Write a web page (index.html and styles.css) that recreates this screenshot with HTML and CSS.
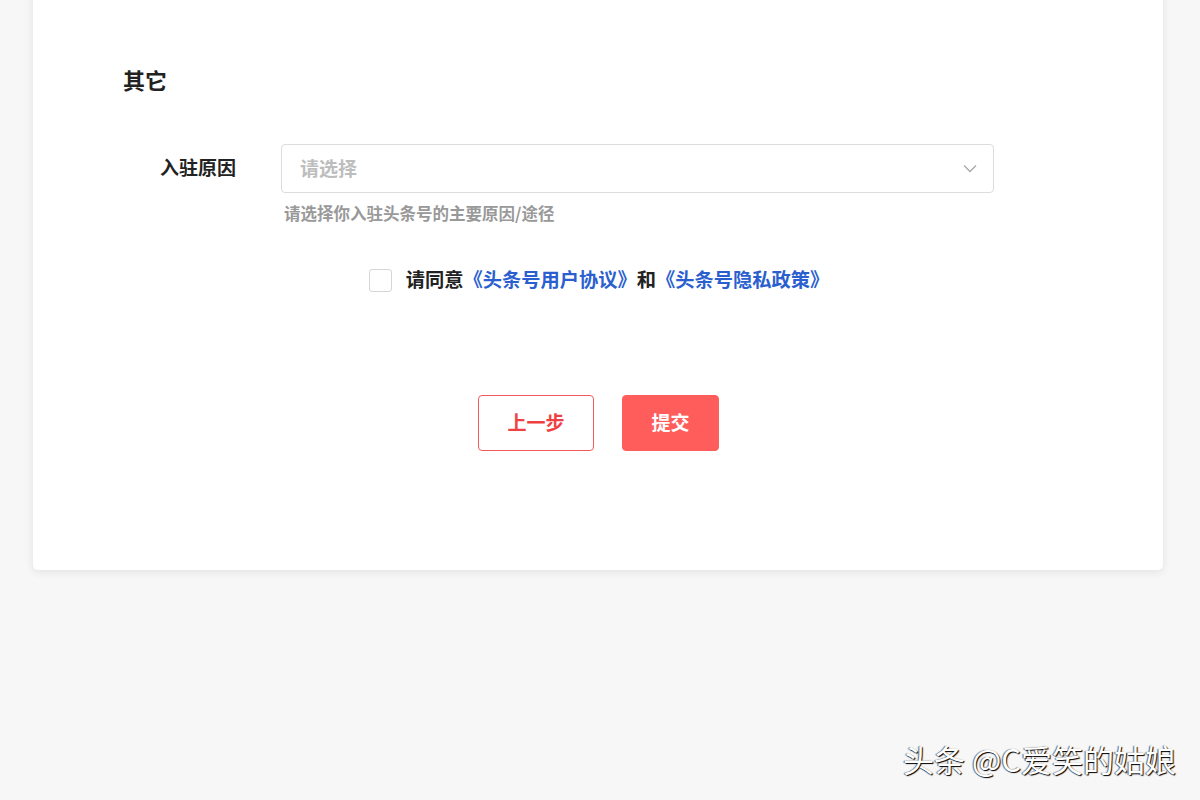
FILE: index.html
```html
<!DOCTYPE html>
<html lang="zh-CN">
<head>
<meta charset="utf-8">
<title>入驻申请</title>
<link rel="stylesheet" href="styles.css">
</head>
<body>
<div class="page">
  <div class="card">
    <h2 class="section-title">其它</h2>
    <div class="form-row">
      <label class="form-label">入驻原因</label>
      <div class="form-control">
        <div class="select">
          <span class="select-placeholder">请选择</span>
          <svg class="select-arrow" width="14" height="9" viewBox="0 0 14 9" aria-hidden="true">
            <path d="M1 1.5 L7 7.5 L13 1.5" fill="none" stroke="#a8a8a8" stroke-width="1.3"/>
          </svg>
        </div>
        <p class="form-help">请选择你入驻头条号的主要原因/途径</p>
      </div>
    </div>
    <div class="agree">
      <span class="checkbox"></span>
      <span class="agree-text">请同意<a class="link" href="#">《头条号用户协议》</a>和<a class="link" href="#">《头条号隐私政策》</a></span>
    </div>
    <div class="actions">
      <button class="btn btn-outline" type="button">上一步</button>
      <button class="btn btn-primary" type="button">提交</button>
    </div>
  </div>
  <div class="watermark">头条 @C爱笑的姑娘</div>
</div>
</body>
</html>
```

FILE: styles.css
```css
* {
  box-sizing: border-box;
}

html, body {
  margin: 0;
  padding: 0;
  height: 100%;
}

body {
  background: #f7f7f7;
  font-family: "Noto Sans CJK SC", "Noto Sans", "Liberation Sans", sans-serif;
  color: #222;
}

.page {
  position: relative;
  width: 1200px;
  height: 800px;
  overflow: hidden;
  padding: 0 37px 0 33px;
}

.card {
  background: #fff;
  margin-top: -10px;
  height: 580px;
  border-radius: 5px;
  box-shadow: 0 2px 10px rgba(0, 0, 0, 0.09);
  padding: 74px 90px 0 90px;
}

.section-title {
  margin: 0;
  font-size: 22px;
  line-height: 30px;
  font-weight: 700;
  color: #222;
}

.form-row {
  display: flex;
  margin-top: 50px;
}

.form-label {
  width: 158px;
  flex: none;
  padding-right: 45px;
  padding-bottom: 4px;
  text-align: right;
  font-size: 19px;
  font-weight: 700;
  line-height: 45px;
  color: #222;
}

.form-control {
  width: 713px;
}

.select {
  height: 49px;
  border: 1px solid #dcdcdc;
  border-radius: 4px;
  display: flex;
  align-items: center;
  justify-content: space-between;
  padding: 0 16px 3px 18px;
}

.select-placeholder {
  font-size: 19px;
  font-weight: 700;
  color: #bdbdbd;
}

.select-arrow {
  display: block;
  margin-top: 3px;
}

.form-help {
  margin: 9px 0 0 3px;
  font-size: 16.5px;
  line-height: 22px;
  font-weight: 700;
  color: #999;
}

.agree {
  display: flex;
  align-items: center;
  justify-content: center;
  gap: 14px;
  margin-top: 42px;
  padding-left: 2px;
}

.checkbox {
  width: 23px;
  height: 23px;
  border: 1px solid #d6d6d6;
  border-radius: 3px;
  background: #fff;
  margin-top: 2px;
}

.agree-text {
  font-size: 19.25px;
  font-weight: 700;
  line-height: 26px;
  color: #222;
}

.link {
  color: #2b5fcf;
  text-decoration: none;
}

.actions {
  display: flex;
  justify-content: center;
  gap: 28px;
  margin-top: 103px;
  padding-left: 1px;
}

.btn {
  height: 56px;
  border-radius: 4px;
  font-family: inherit;
  font-size: 19px;
  font-weight: 700;
  cursor: pointer;
  padding: 0 0 3px;
}

.btn-outline {
  width: 116px;
  background: #fff;
  border: 1px solid #f4595c;
  color: #f04142;
}

.btn-primary {
  width: 97px;
  background: #ff5c5c;
  border: 1px solid #ff5c5c;
  color: #fff;
}

.watermark {
  position: absolute;
  right: 24px;
  bottom: 23px;
  font-size: 31px;
  line-height: 36px;
  color: #fff;
  text-shadow: 1px 1px 1px #000, -1px 0 1px rgba(0, 0, 0, 0.6);
}
```
